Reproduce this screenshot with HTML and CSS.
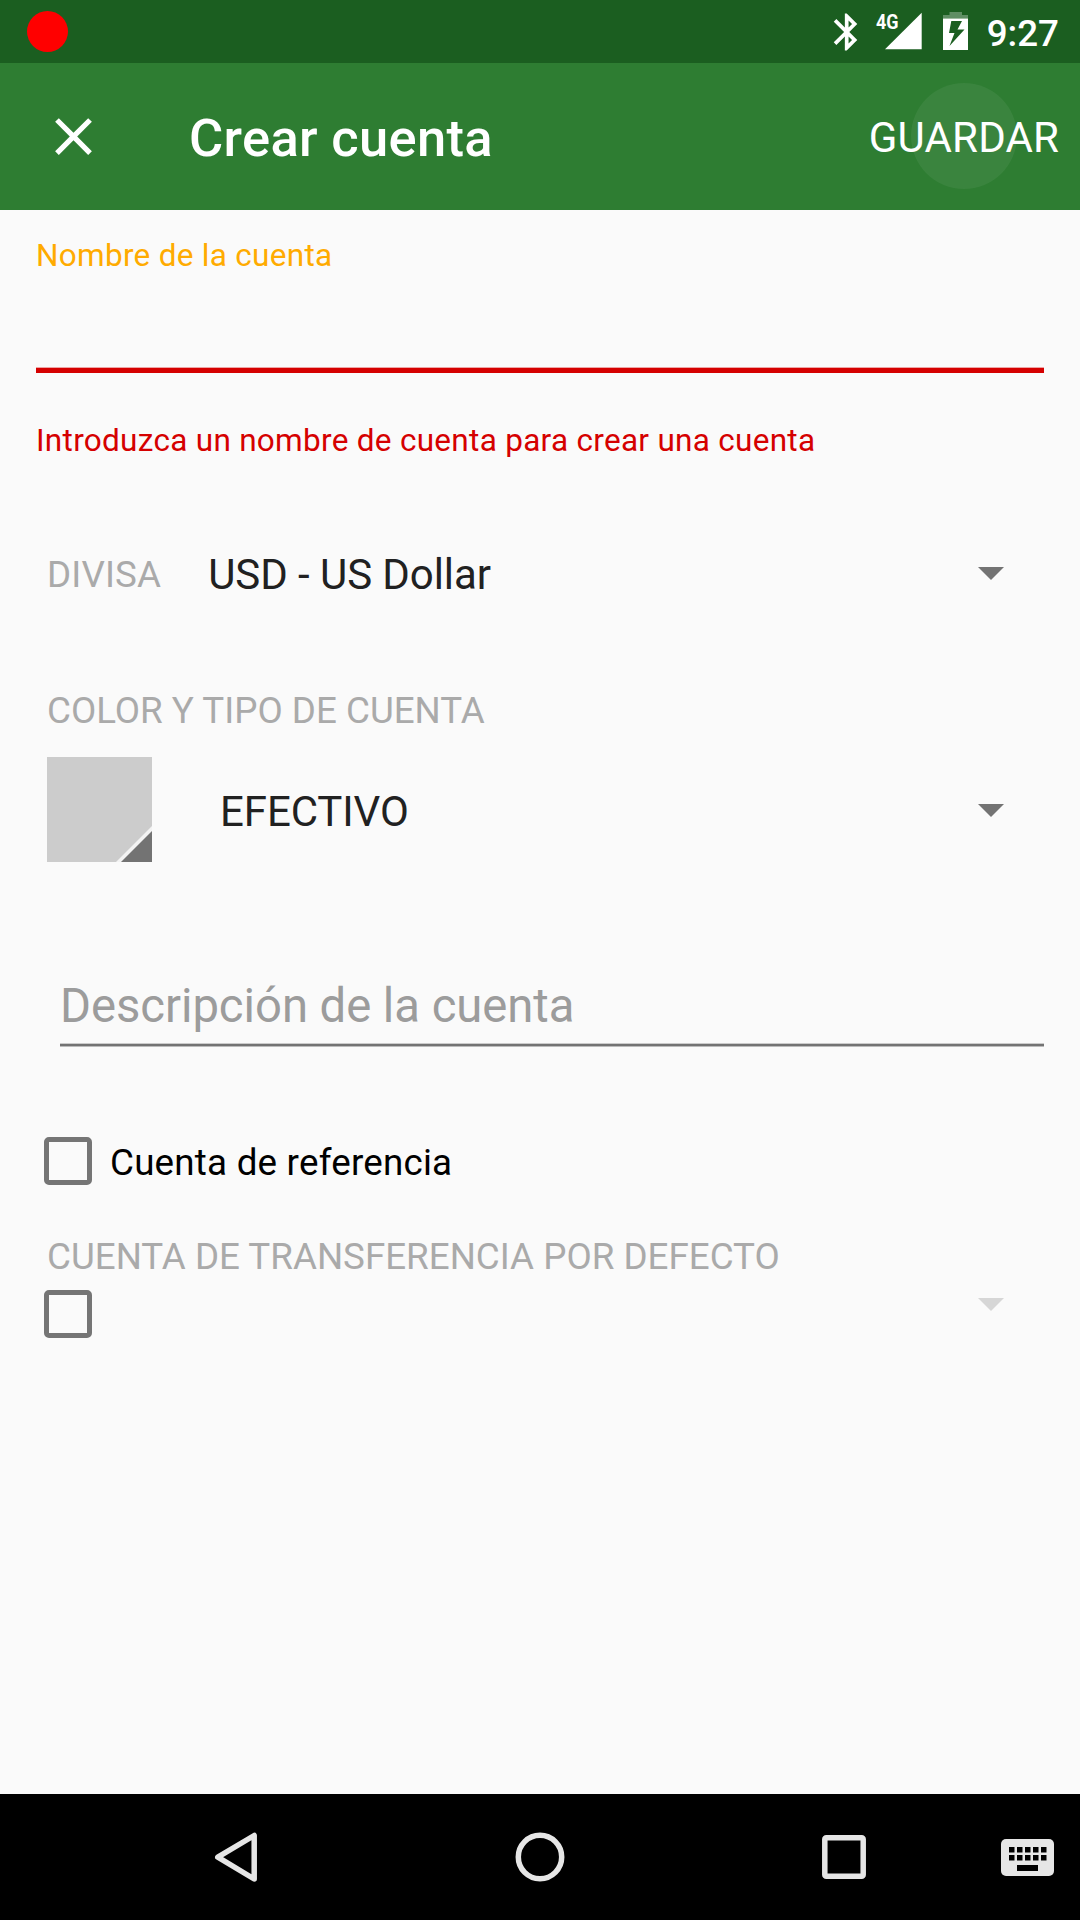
FILE: index.html
```html
<!DOCTYPE html>
<html lang="es">
<head>
<meta charset="utf-8">
<title>Crear cuenta</title>
<link rel="stylesheet" href="styles.css">
</head>
<body>
<header class="status-bar">
  <span class="record-dot"></span>
  <svg class="status-icons" width="150" height="63" viewBox="0 0 150 63">
    <path transform="translate(-.5 9.800) scale(1.850)" fill="#fff" d="M17.710 7.710L12 2h-1v7.590L6.410 5 5 6.410 10.590 12 5 17.590 6.410 19 11 14.410V22h1l5.710-5.710-4.300-4.290 4.300-4.290zM13 5.830l1.880 1.880L13 9.590V5.830zm1.880 10.460L13 18.170v-3.760l1.880 1.880z"/>
    <path d="M60 49.300 L96.700 12.700 V49.300Z" fill="#fff"/>
    <text class="network-type" x="51" y="29" textLength="22.500" lengthAdjust="spacingAndGlyphs">4G</text>
    <path d="M118 18.500 V15 H124.500 V12 H137 V15 H143 V18.500Z" fill="#fff" fill-opacity=".3"/>
    <path fill-rule="evenodd" d="M118 18.500 H143 V50 H118Z M126.300 21 L124 33 H129.500 L124.500 46 L139.500 29.500 H132.500 L137 21Z" fill="#fff"/>
  </svg>
  <time class="clock">9:27</time>
</header>
<div class="app-bar">
  <button class="close" aria-label="Cerrar">
    <svg width="63" height="63" viewBox="0 0 24 24"><path fill="#fff" d="M19 6.410 17.590 5 12 10.590 6.410 5 5 6.410 10.590 12 5 17.590 6.410 19 12 13.410 17.590 19 19 17.590 13.410 12z"/></svg>
  </button>
  <h1 class="title">Crear cuenta</h1>
  <button class="save">GUARDAR</button>
</div>
<main class="form">
  <div class="name-field">
    <label class="name-label">Nombre de la cuenta</label>
    <div class="name-input"></div>
    <p class="error">Introduzca un nombre de cuenta para crear una cuenta</p>
  </div>
  <div class="row currency">
    <span class="caption">DIVISA</span>
    <span class="value">USD - US Dollar</span>
    <svg class="arrow" width="26" height="13" viewBox="0 0 26 13"><path d="M0 0H26L13 13Z"/></svg>
  </div>
  <div class="caption type-caption">COLOR Y TIPO DE CUENTA</div>
  <div class="row type">
    <svg class="swatch" width="105" height="105" viewBox="0 0 105 105">
      <path fill="#ccc" d="M0 0H105V105H0Z"/>
      <path fill="#f3f3f3" d="M105 69V105H69Z"/>
      <path fill="#737373" d="M105 74V105H74Z"/>
    </svg>
    <span class="value">EFECTIVO</span>
    <svg class="arrow" width="26" height="13" viewBox="0 0 26 13"><path d="M0 0H26L13 13Z"/></svg>
  </div>
  <div class="description">Descripción de la cuenta</div>
  <label class="check-row">
    <span class="checkbox"></span>
    <span class="check-label">Cuenta de referencia</span>
  </label>
  <div class="caption transfer-caption">CUENTA DE TRANSFERENCIA POR DEFECTO</div>
  <div class="row transfer">
    <span class="checkbox"></span>
    <svg class="arrow disabled" width="26" height="13" viewBox="0 0 26 13"><path d="M0 0H26L13 13Z"/></svg>
  </div>
</main>
<nav class="nav-bar">
  <svg width="1080" height="126" viewBox="0 0 1080 126">
    <g fill="none" stroke="#e6e6e6" stroke-width="5.500" stroke-linejoin="round">
      <path d="M217.800 63.200 L254.200 41.500 V85Z"/>
      <circle cx="540" cy="63" r="21.700"/>
      <rect x="824.800" y="43.800" width="38.400" height="38.400" rx="1.500"/>
    </g>
    <rect x="1001" y="45" width="53" height="37" rx="5" fill="#e6e6e6"/>
    <g fill="#000">
      <path d="M1009 53h5.500v5.500h-5.500z M1017 53h5.500v5.500h-5.500z M1025 53h5.500v5.500h-5.500z M1033 53h5.500v5.500h-5.500z M1041 53h5.500v5.500h-5.500z"/>
      <path d="M1009 61h5.500v5.500h-5.500z M1017 61h5.500v5.500h-5.500z M1025 61h5.500v5.500h-5.500z M1033 61h5.500v5.500h-5.500z M1041 61h5.500v5.500h-5.500z"/>
      <path d="M1017 71h21v6h-21z"/>
    </g>
  </svg>
</nav>
</body>
</html>
```
FILE: styles.css
```css
* {
  box-sizing: border-box;
}

body {
  display: flex;
  flex-direction: column;
  width: 1080px;
  height: 1920px;
  margin: 0;
  overflow: hidden;
  background: #fafafa;
  font-family: Roboto, sans-serif;
  color: #212121;
}

button {
  padding: 0;
  border: 0;
  background: none;
  font: inherit;
  color: inherit;
}

.status-bar {
  display: flex;
  flex: none;
  align-items: center;
  height: 63px;
  padding: 0 21px 0 27px;
  background: #1b5e20;
  color: #fff;
}

.record-dot {
  width: 41px;
  height: 41px;
  border-radius: 50%;
  background: #f00;
}

.status-icons {
  margin-left: auto;
}

.network-type {
  fill: #fff;
  font-size: 21px;
  font-weight: 700;
}

.clock {
  width: 74px;
  margin-left: 10px;
  padding-top: 4px;
  font-size: 36.750px;
  font-weight: 500;
  text-align: right;
}

.app-bar {
  display: flex;
  flex: none;
  align-items: center;
  height: 147px;
  padding: 0 21px 0 42px;
  background: #2e7d32;
  color: #fff;
}

.close,
.close svg {
  display: block;
}

.title {
  margin: 0 0 0 84px;
  padding-top: 3px;
  font-size: 52.500px;
  font-weight: 500;
  letter-spacing: .32px;
}

.save {
  position: relative;
  margin-left: auto;
  padding-top: 2px;
  font-size: 42px;
  letter-spacing: .15px;
}

.save::before {
  content: "";
  position: absolute;
  top: calc(50% - 1px);
  left: 50%;
  width: 106px;
  height: 106px;
  border-radius: 50%;
  background: rgba(255, 255, 255, .06);
  transform: translate(-50%, -50%);
}

.form {
  display: flex;
  flex: 1;
  flex-direction: column;
  padding: 26px 36px 0;
}

.name-field {
  display: flex;
  flex-direction: column;
  font-size: 31.500px;
  line-height: 40px;
  letter-spacing: .29px;
}

.name-label {
  color: #ffab00;
}

.name-input {
  height: 97px;
  border-bottom: 5px solid #d50000;
  box-shadow: inset 0 -1px 0 #eea4a4;
}

.error {
  margin: 48px 0 0;
  color: #d50000;
}

.row {
  display: flex;
  align-items: center;
}

.caption {
  font-size: 36.750px;
  line-height: 40px;
  color: #aaa;
}

.value {
  font-size: 42px;
  line-height: 60px;
}

.arrow {
  margin-left: auto;
  margin-right: 40px;
  fill: #737373;
}

.disabled {
  fill: #d6d6d6;
}

.currency {
  height: 60px;
  margin-top: 84px;
  padding-left: 11px;
}

.currency .caption {
  letter-spacing: .15px;
}

.currency .value {
  margin-left: 47px;
  letter-spacing: -.07px;
}

.currency .arrow {
  margin-bottom: 3px;
}

.type-caption {
  margin: 86px 0 0 11px;
}

.type {
  margin-top: 26px;
  padding-left: 11px;
}

.type .value {
  margin-left: 68px;
  padding-top: 4px;
  letter-spacing: -.1px;
}

.type .arrow {
  margin-top: 2px;
}

.description {
  height: 71px;
  margin: 113px 0 0 24px;
  border-bottom: 2px solid #737373;
  box-shadow: inset 0 -1px 0 #cbcbcb, 0 1px 0 #bbb;
  font-size: 47.250px;
  line-height: 62px;
  letter-spacing: -.05px;
  color: #9c9c9c;
}

.check-row {
  display: flex;
  align-items: center;
  gap: 18px;
  margin: 91px 0 0 8px;
}

.checkbox {
  width: 48px;
  height: 48px;
  border: 5px solid #757575;
  border-radius: 5px;
}

.check-label {
  padding-top: 3px;
  font-size: 36.750px;
  line-height: 42px;
  letter-spacing: .22px;
  color: #000;
}

.transfer-caption {
  margin: 52px 0 0 11px;
}

.transfer {
  margin-top: 13px;
  padding-left: 8px;
}

.transfer .arrow {
  margin-bottom: 19px;
}

.nav-bar {
  flex: none;
  height: 126px;
  background: #000;
}

.nav-bar svg {
  display: block;
}
```
